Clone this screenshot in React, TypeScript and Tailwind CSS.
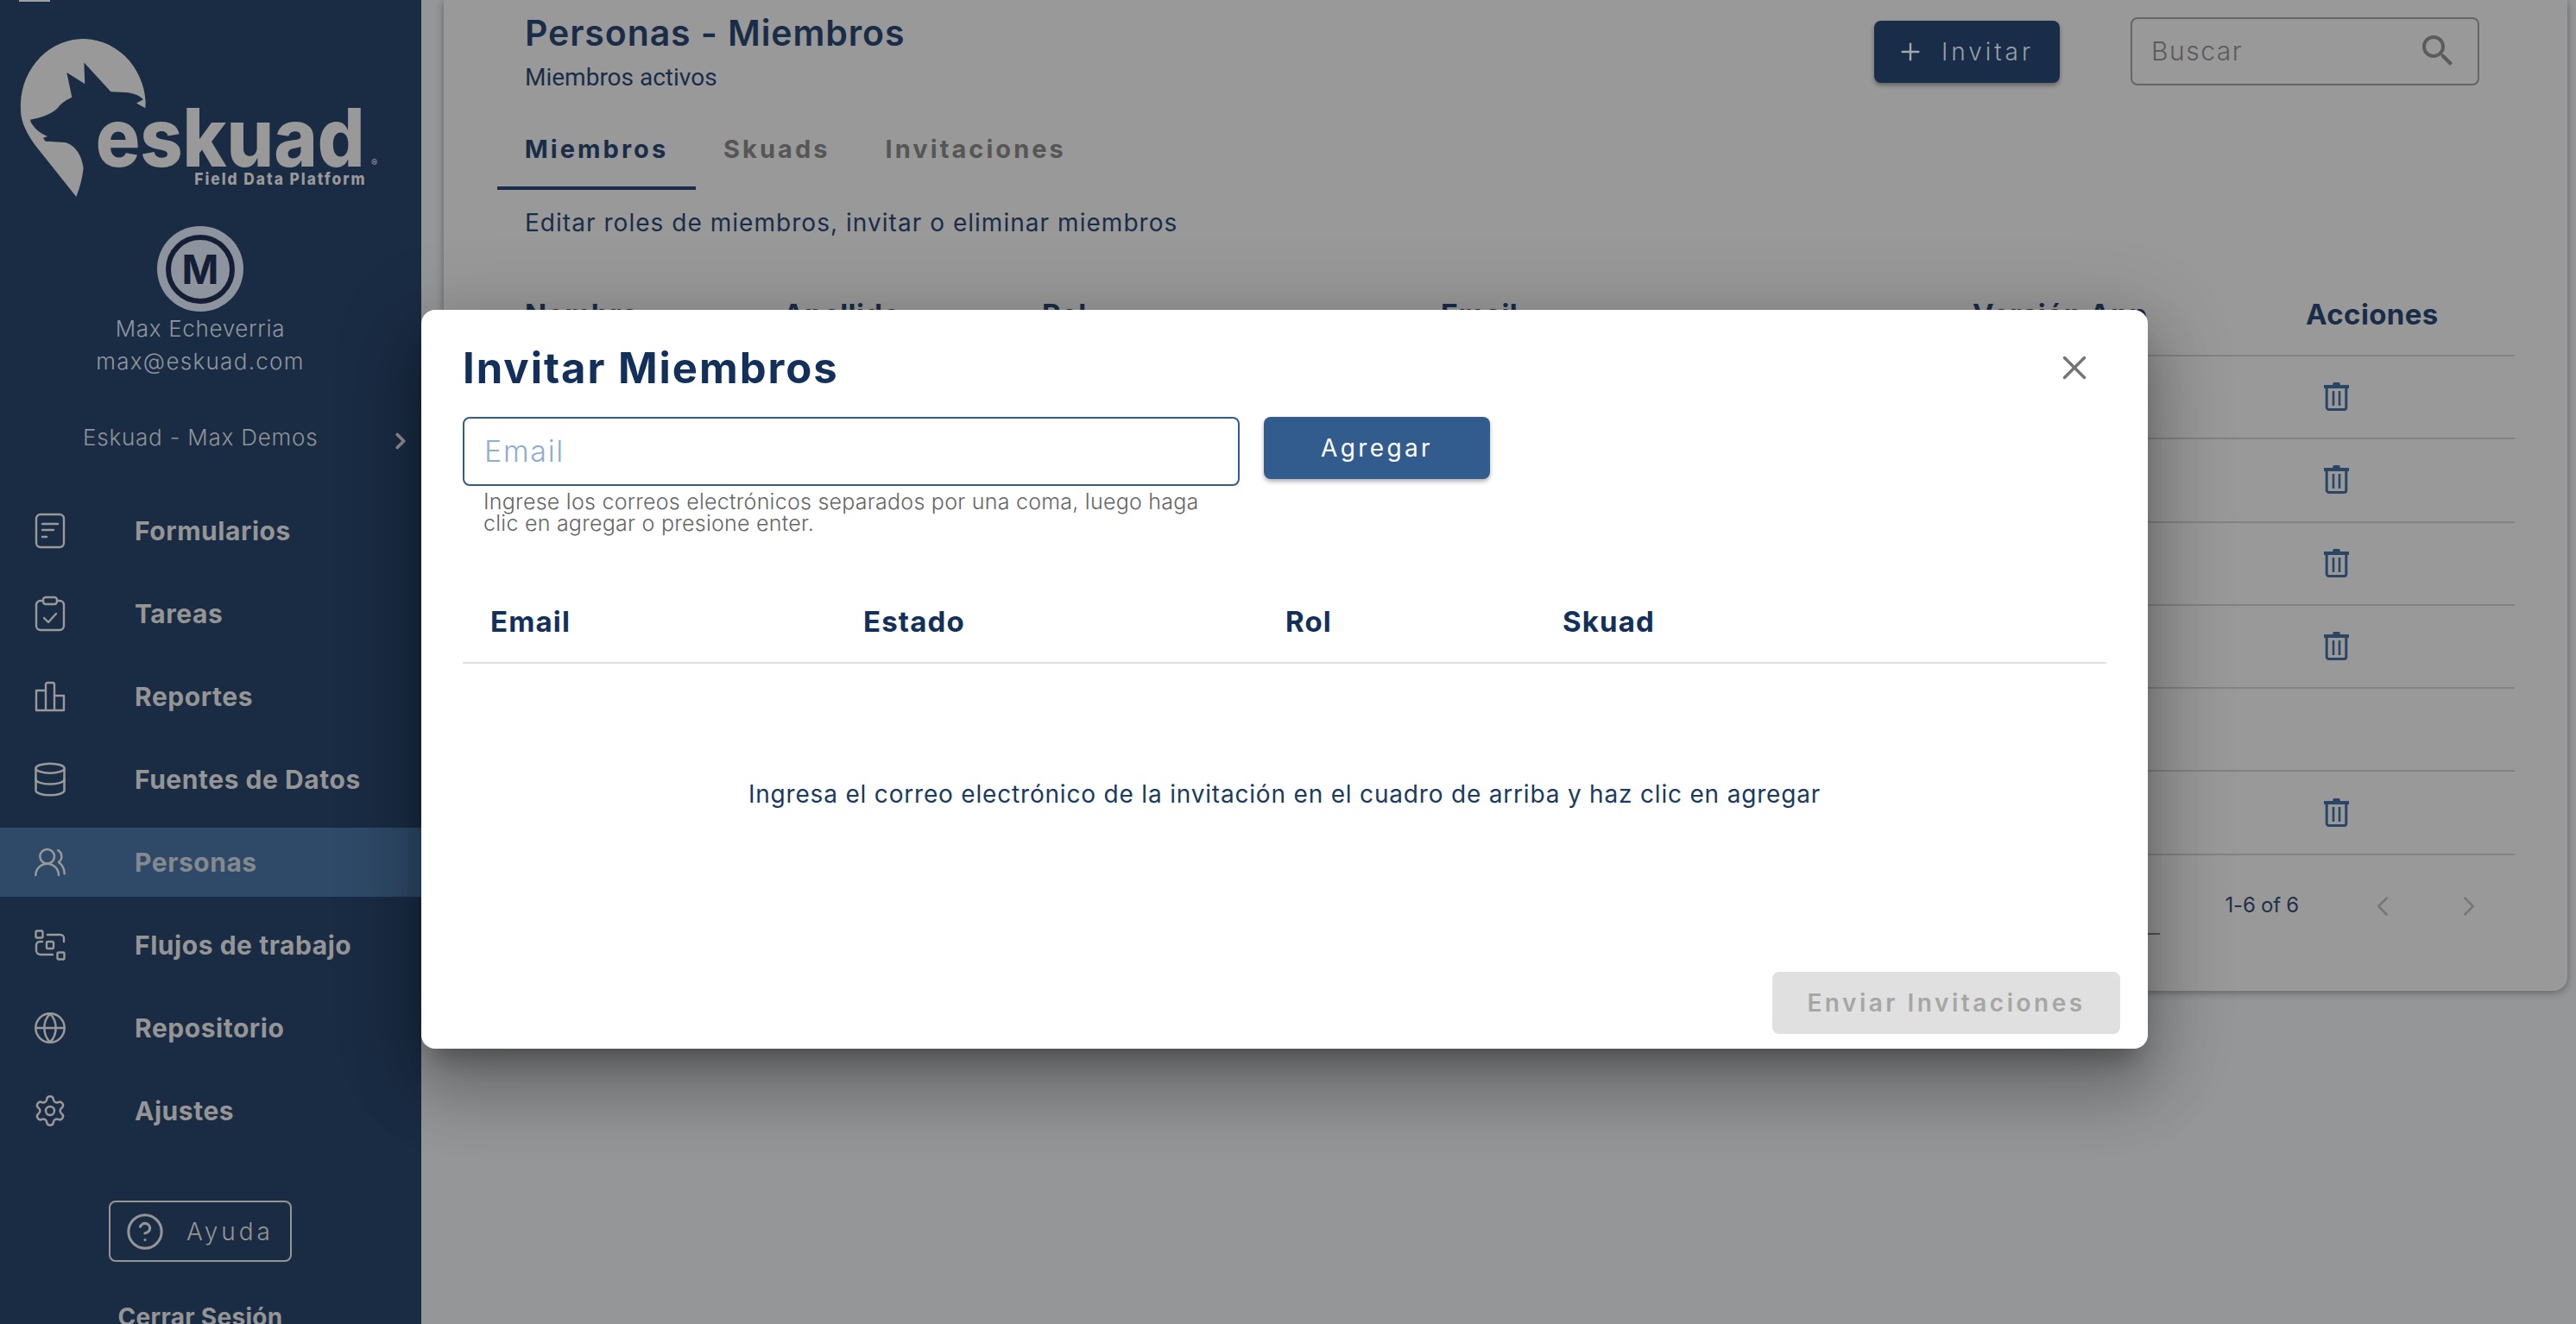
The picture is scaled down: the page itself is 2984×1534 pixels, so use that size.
import { Database, UsersRound, Globe, Settings, CircleHelp, ChevronRight, ChevronLeft, Plus, X } from "lucide-react";
import type { ReactNode } from "react";

const sans = "font-['Inter','Liberation_Sans',sans-serif]";

function FormIcon() {
  return (
    <svg width="36" height="42" viewBox="0 0 36 42" fill="none" stroke="currentColor" strokeWidth="2.4" strokeLinecap="round">
      <rect x="2" y="2" width="32" height="38" rx="5" />
      <path d="M9 13h18M9 20h13M9 28h5" />
    </svg>
  );
}

function TaskIcon() {
  return (
    <svg width="36" height="42" viewBox="0 0 36 42" fill="none" stroke="currentColor" strokeWidth="2.4" strokeLinecap="round" strokeLinejoin="round">
      <rect x="10" y="2" width="16" height="8" rx="3" />
      <path d="M10 6H7a5 5 0 0 0-5 5v24a5 5 0 0 0 5 5h22a5 5 0 0 0 5-5V11a5 5 0 0 0-5-5h-3" />
      <path d="M11 26l5 5 9-10" />
    </svg>
  );
}

function BarsIcon() {
  return (
    <svg width="36" height="36" viewBox="0 0 36 36" fill="none" stroke="currentColor" strokeWidth="2.4" strokeLinejoin="round">
      <path d="M2 11h11v23H2zM13 4a2 2 0 0 1 2-2h6a2 2 0 0 1 2 2v30H13zM23 17h11v17H23z" />
    </svg>
  );
}

function FlowIcon() {
  return (
    <svg width="36" height="36" viewBox="0 0 36 36" fill="none" stroke="currentColor" strokeWidth="2.4" strokeLinecap="round" strokeLinejoin="round">
      <rect x="1.5" y="1.5" width="8" height="8" rx="1.5" />
      <rect x="14" y="14" width="8" height="8" rx="1.5" />
      <rect x="26.5" y="26.5" width="8" height="8" rx="1.5" />
      <path d="M15 6h15a4 4 0 0 1 4 4v4M9 14H6a4 4 0 0 0-4 4v6a5 5 0 0 0 5 5h14" />
    </svg>
  );
}

function Trash() {
  return (
    <svg width="29" height="34" viewBox="0 0 29 34" fill="none" className="text-[#2a4566]">
      <path d="M0 4h10l1-3h7l1 3h10v4H0z" fill="currentColor" />
      <path d="M3.2 8v22a2.5 2.5 0 0 0 2.5 2.5h17.6a2.5 2.5 0 0 0 2.5-2.5V8" stroke="currentColor" strokeWidth="3" />
      <path d="M11 11v17M18 11v17" stroke="currentColor" strokeWidth="2.6" />
    </svg>
  );
}

function Logo() {
  return (
    <svg width="448" height="251" viewBox="0 0 1344 702" preserveAspectRatio="none" className="block">
      <path
        d="M505 350 L474 334 L498 322 Q480 305 445 300 L385 297 L292 203 L295 272 L232 235 L250 315 Q215 330 200 350 Q175 375 105 388 L108 398 Q130 430 165 442 L150 447 L158 458 Q200 460 230 462 Q280 480 290 545 Q285 590 265 638 L130 480 Q72 410 72 357 A217 217 0 0 1 506 330 Z"
        fill="#999999"
      />
      <text x="332" y="540" fontFamily="Inter, sans-serif" fontWeight="800" fontSize="262" fill="#999999" textLength="936" lengthAdjust="spacingAndGlyphs">eskuad</text>
      <text x="676" y="599" fontFamily="Inter, sans-serif" fontWeight="800" fontSize="52" fill="#999999" textLength="592" lengthAdjust="spacing">Field Data Platform</text>
      <text x="1290" y="541" fontFamily="Inter, sans-serif" fontSize="32" fill="#999999">®</text>
    </svg>
  );
}

const navItems: { label: string; icon: ReactNode; active?: boolean }[] = [
  { label: "Formularios", icon: <FormIcon /> },
  { label: "Tareas", icon: <TaskIcon /> },
  { label: "Reportes", icon: <BarsIcon /> },
  { label: "Fuentes de Datos", icon: <Database size={44} strokeWidth={1.4} /> },
  { label: "Personas", icon: <UsersRound size={40} strokeWidth={1.5} />, active: true },
  { label: "Flujos de trabajo", icon: <FlowIcon /> },
  { label: "Repositorio", icon: <Globe size={40} strokeWidth={1.5} /> },
  { label: "Ajustes", icon: <Settings size={40} strokeWidth={1.5} /> },
];

function Sidebar() {
  return (
    <aside className="flex h-[1534px] w-[488px] shrink-0 flex-col overflow-hidden bg-[#1a2c44] text-[#999999] *:shrink-0">
      <div className="ml-[22px] h-[2px] w-[36px] bg-[#a0a0a0]" />
      <div className="mt-[-2px]">
        <Logo />
      </div>
      <div className="mt-[11px] flex w-[464px] flex-col items-center">
        <div className="flex h-[99px] w-[100px] items-center justify-center rounded-full bg-[#8d949e]">
          <div className="flex h-[80px] w-[80px] items-center justify-center rounded-full border-[6px] border-[#161e36] text-[46px] leading-none font-bold text-[#161e36]">
            M
          </div>
        </div>
        <div className="mt-[1px] text-[26px] leading-[37px] font-light tracking-[0.025em] text-[#8f969f]">Max Echeverria</div>
        <div className="text-[26px] leading-[39px] font-light tracking-[0.05em] text-[#8f969f]">max@eskuad.com</div>
      </div>
      <div className="relative mt-[50px] flex h-[36px] items-center">
        <span className="ml-[96px] text-[26px] font-light tracking-[0.03em] text-[#8f9399]">Eskuad - Max Demos</span>
        <ChevronRight size={30} strokeWidth={3} className="absolute left-[449px] top-[8px] text-[#909090]" />
      </div>
      <nav className="mt-[51px] flex flex-col">
        {navItems.map((it) => (
          <div key={it.label} className={`mb-[16px] flex h-[80px] items-center ${it.active ? "bg-[#2f4a68]" : ""}`}>
            <div className="flex w-[116px] justify-center">{it.icon}</div>
            <span className={`ml-[40px] text-[30px] font-bold tracking-[0.018em] ${it.active ? "text-[#84898f]" : "text-[#959595]"}`}>{it.label}</span>
          </div>
        ))}
      </nav>
      <div className="ml-[126px] mt-[48px] flex h-[71px] w-[212px] items-center rounded-[8px] border-2 border-[#959595]">
        <CircleHelp size={46} strokeWidth={1.6} className="ml-[17px] text-[#959595]" />
        <span className="ml-[25px] text-[28px] font-light tracking-[0.14em] text-[#959595]">Ayuda</span>
      </div>
      <div className="mt-[46px] w-[464px] text-center text-[28px] leading-[36px] font-bold tracking-[0.01em] text-[#959595]">Cerrar Sesión</div>
    </aside>
  );
}

const rows = [true, true, true, true, false, true];

function Card() {
  return (
    <section className="ml-[26px] mr-[10px] flex h-[1148px] flex-col rounded-b-[16px] bg-[#999999] shadow-[0_2px_10px_rgba(0,0,0,0.35)]">
      <div className="flex h-[130px] justify-between pl-[94px] pr-[102px]">
        <div className="pt-[14px]">
          <h2 className="text-[41px] leading-[48px] font-semibold tracking-[0.022em] text-[#192d48]">Personas - Miembros</h2>
          <p className="mt-[12px] font-['Roboto',sans-serif] text-[28px] leading-[32px] text-[#192d48]">Miembros activos</p>
        </div>
        <div className="flex items-start">
          <button className="mt-[24px] flex h-[72px] w-[215px] items-center rounded-[8px] bg-[#192d48] shadow-[0_3px_5px_rgba(0,0,0,0.35)]">
            <Plus size={32} strokeWidth={1.8} className="ml-[26px] text-[#a0a8b2]" />
            <span className="ml-[20px] text-[28px] font-light tracking-[0.14em] text-[#97a0ab]">Invitar</span>
          </button>
          <div className="relative ml-[82px] mt-[20px] flex h-[79px] w-[404px] items-center rounded-[8px] border-2 border-[#666666] pl-[22px]">
            <span className="text-[30px] font-light tracking-[0.05em] text-[#5b5b5b]">Buscar</span>
            <svg width="48" height="48" viewBox="0 0 24 24" fill="#5b5b5b" className="absolute right-[22px] top-[13px]">
              <path d="M15.5 14h-.79l-.28-.27C15.41 12.59 16 11.11 16 9.5 16 5.91 13.09 3 9.5 3S3 5.91 3 9.5 5.91 16 9.5 16c1.61 0 3.09-.59 4.23-1.57l.27.28v.79l5 4.99L20.49 19l-4.99-5zm-6 0C7.01 14 5 11.99 5 9.5S7.01 5 9.5 5 14 7.01 14 9.5 11.99 14 9.5 14z" />
            </svg>
          </div>
        </div>
      </div>
      <div className="ml-[62px] flex h-[90px]">
        <div className="flex w-[230px] items-center justify-center border-b-4 border-[#192d48] text-[29px] font-bold tracking-[0.105em] text-[#192d48]">Miembros</div>
        <div className="ml-[32px] flex items-center pb-[4px] text-[29px] font-bold tracking-[0.105em] text-[#565656]">Skuads</div>
        <div className="ml-[64px] flex items-center pb-[4px] text-[29px] font-bold tracking-[0.105em] text-[#565656]">Invitaciones</div>
      </div>
      <p className="ml-[94px] mt-[20px] text-[28px] leading-[36px] tracking-[0.037em] text-[#192d48]">Editar roles de miembros, invitar o eliminar miembros</p>
      <div className="ml-[62px] mr-[61px] mt-[41px]">
        <div className="flex h-[96px] items-center border-b-2 border-[#828282] pt-[2px] text-[33px] font-bold tracking-[0.012em] text-[#192d48]">
          <span className="w-[299px] pl-[32px]">Nombre</span>
          <span className="w-[300px] pl-[32px]">Apellido</span>
          <span className="w-[462px] pl-[32px]">Rol</span>
          <span className="w-[616px] pl-[32px]">Email</span>
          <span className="w-[386px] pl-[32px]">Versión App</span>
          <span className="pl-[32px]">Acciones</span>
        </div>
        {rows.map((hasTrash, i) => (
          <div key={i} className="flex h-[96.3px] items-center justify-end border-b-2 border-[#828282] pb-[2px] pr-[192px]">
            {hasTrash && <Trash />}
          </div>
        ))}
      </div>
      <div className="relative flex flex-1 items-start justify-end pr-[95px] pt-[40px] text-[#1f3148]">
        <span className="mr-[78px] text-[24px] tracking-[-0.01em]">1-6 of 6</span>
        <ChevronLeft size={38} strokeWidth={1.6} className="text-[#777777]" />
        <ChevronRight size={38} strokeWidth={1.6} className="ml-[62px] text-[#777777]" />
        <div className="absolute left-[1900px] top-[90px] h-[2px] w-[88px] bg-[#555555]" />
      </div>
    </section>
  );
}

function InviteModal() {
  return (
    <div className="absolute left-[488px] top-[359px] flex h-[856px] w-[2000px] flex-col rounded-[16px] bg-white px-[48px] shadow-[0_22px_30px_-14px_rgba(0,0,0,0.3),0_48px_76px_6px_rgba(0,0,0,0.2),0_18px_92px_16px_rgba(0,0,0,0.16)]">
      <div className="flex h-[124px] items-start justify-between">
        <h2 className="mt-[36px] text-[49px] leading-[64px] font-bold tracking-[0.04em] text-[#12305a]">Invitar Miembros</h2>
        <X size={46} strokeWidth={1.8} className="mr-[14px] mt-[44px] text-[#757575]" />
      </div>
      <div className="flex items-start">
        <div className="w-[900px]">
          <div className="flex h-[80px] items-center rounded-[8px] border-2 border-[#335c8e] pb-[2px] pl-[23px] text-[34px] font-light tracking-[0.05em] text-[#8fadcf]">Email</div>
          <p className="mt-[6px] w-[860px] pl-[24px] text-[25px] leading-[25px] font-light tracking-[0.01em] text-[#666666]">
            Ingrese los correos electrónicos separados por una coma, luego haga clic en agregar o presione enter.
          </p>
        </div>
        <button className="ml-[28px] h-[72px] w-[262px] rounded-[8px] bg-[#335c8e] text-[28px] tracking-[0.12em] text-white shadow-[0_3px_5px_rgba(0,0,0,0.3)]">Agregar</button>
      </div>
      <div className="mt-[54px] flex h-[96px] items-center border-b-2 border-[#e0e0e0] pt-[2px] text-[33px] font-bold tracking-[0.035em] text-[#12305a]">
        <span className="w-[432px] pl-[32px]">Email</span>
        <span className="w-[489px] pl-[32px]">Estado</span>
        <span className="w-[321px] pl-[32px]">Rol</span>
        <span className="pl-[32px]">Skuad</span>
      </div>
      <div className="flex h-[300px] items-center justify-center pt-[2px] text-[28px] tracking-[0.029em] text-[#1a3a5f]">
        Ingresa el correo electrónico de la invitación en el cuadro de arriba y haz clic en agregar
      </div>
      <div className="mr-[-16px] mt-[57px] flex justify-end">
        <button className="h-[72px] w-[403px] rounded-[8px] bg-[#e0e0e0] text-[28px] font-semibold tracking-[0.125em] text-[#a6a6a6]">Enviar Invitaciones</button>
      </div>
    </div>
  );
}

export default function App() {
  return (
    <div className={`relative flex h-[1534px] w-[2984px] overflow-hidden bg-[#959698] ${sans}`}>
      <Sidebar />
      <main className="flex-1">
        <Card />
      </main>
      <InviteModal />
    </div>
  );
}
